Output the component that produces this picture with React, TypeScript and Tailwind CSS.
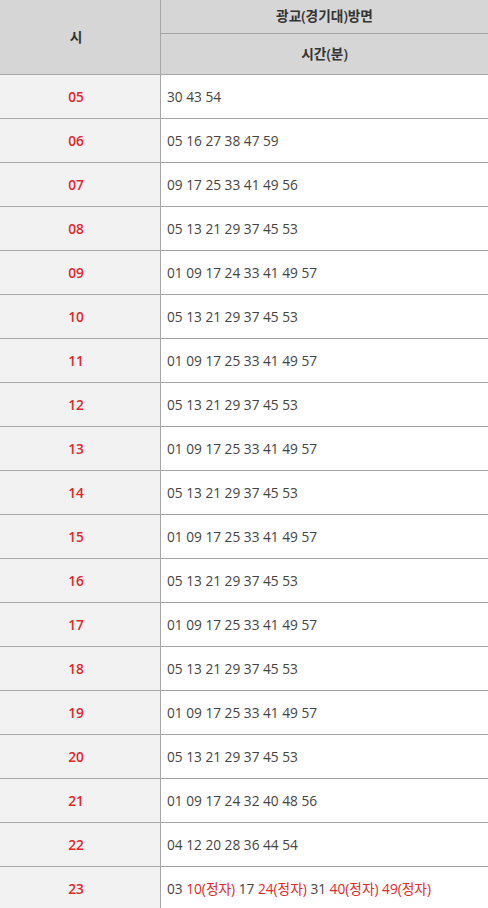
import React from "react";

const R = (s: string) => <span className="text-[#e5262b]">{s}</span>;

const rows: [string, React.ReactNode][] = [
  ["05", "30 43 54"],
  ["06", "05 16 27 38 47 59"],
  ["07", "09 17 25 33 41 49 56"],
  ["08", "05 13 21 29 37 45 53"],
  ["09", "01 09 17 24 33 41 49 57"],
  ["10", "05 13 21 29 37 45 53"],
  ["11", "01 09 17 25 33 41 49 57"],
  ["12", "05 13 21 29 37 45 53"],
  ["13", "01 09 17 25 33 41 49 57"],
  ["14", "05 13 21 29 37 45 53"],
  ["15", "01 09 17 25 33 41 49 57"],
  ["16", "05 13 21 29 37 45 53"],
  ["17", "01 09 17 25 33 41 49 57"],
  ["18", "05 13 21 29 37 45 53"],
  ["19", "01 09 17 25 33 41 49 57"],
  ["20", "05 13 21 29 37 45 53"],
  ["21", "01 09 17 24 32 40 48 56"],
  ["22", "04 12 20 28 36 44 54"],
  [
    "23",
    <>
      03 {R("10(정자)")} 17 {R("24(정자)")} 31 {R("40(정자)")} {R("49(정자)")}
    </>,
  ],
];

export default function App() {
  return (
    <div
      className="w-[488px] bg-white text-[13.7px] text-[#444]"
      style={{ fontFamily: '"Open Sans", "Noto Sans CJK KR", sans-serif' }}
    >
      <div className="flex border-b border-[#a6a6a6] bg-[#d6d6d6]">
        <div className="flex h-[74px] w-[161px] shrink-0 items-center justify-center border-r border-[#a6a6a6] pr-[8px] font-semibold text-[#333]">
          시
        </div>
        <div className="flex flex-1 flex-col">
          <div className="flex h-[34px] items-center justify-center border-b border-[#a6a6a6] font-semibold text-[#333]">
            광교(경기대)방면
          </div>
          <div className="flex h-[40px] items-center justify-center font-semibold text-[#333]">
            시간(분)
          </div>
        </div>
      </div>
      {rows.map(([h, t]) => (
        <div key={h} className="flex h-[44px] border-b border-[#a6a6a6]">
          <div className="flex w-[161px] shrink-0 items-center justify-center border-r border-[#a6a6a6] bg-[#f2f2f2] pt-[2px] pr-[8px] font-semibold text-[#e5262b]">
            {h}
          </div>
          <div className="flex flex-1 items-center pt-[2px] pl-[6px]">
            <span>{t}</span>
          </div>
        </div>
      ))}
    </div>
  );
}
